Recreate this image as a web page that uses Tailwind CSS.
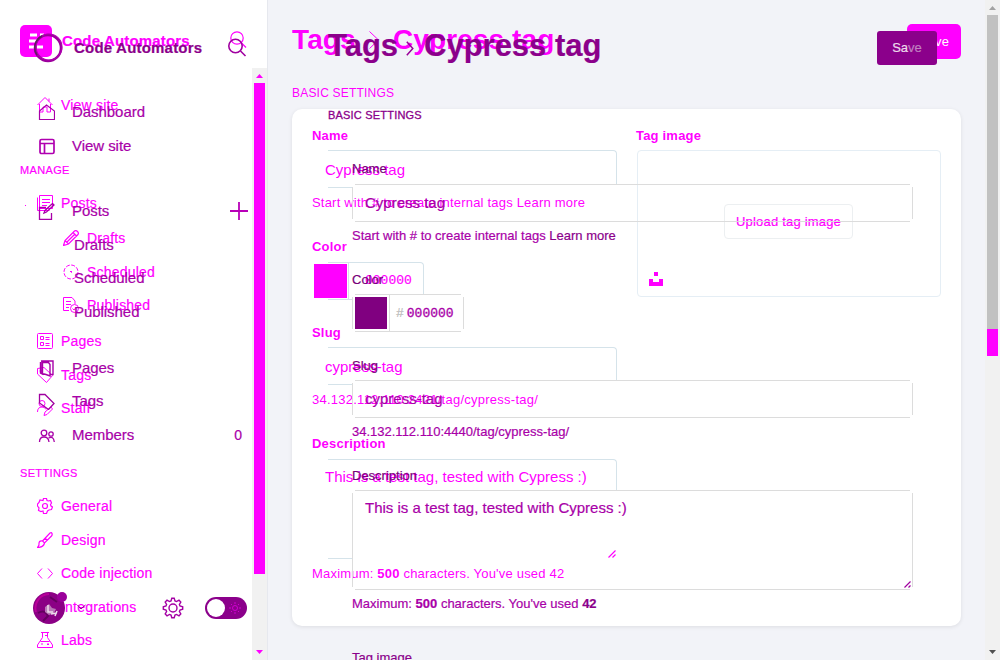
<!DOCTYPE html>
<html lang="en">
<head>
<meta charset="utf-8">
<title>Tags - Cypress tag</title>
<script src="https://cdn.jsdelivr.net/npm/@tailwindcss/browser@4"></script>
</head>
<body class="relative h-[660px] w-[1000px] overflow-hidden bg-[#f2f3f8] font-['Liberation_Sans',Arial,sans-serif] text-[#ff00ff]">

<!-- First layer -->
<div class="flex h-[660px] w-[1000px] overflow-hidden">
  <aside class="relative h-[660px] w-[268px] shrink-0 overflow-hidden border-r border-[#e6e8ee] bg-white text-[14px] leading-6 tracking-[0.2px] [-webkit-text-stroke:0.2px]">
    <div class="flex h-[57px] items-start pt-[25px] pl-5">
      <svg class="size-8" viewBox="0 0 32 32"><rect width="32" height="32" rx="5" fill="#f0f"/><path d="M10 10h7M20 10h4M9 16h8M9 22h5M17 22h6" stroke="#fff" stroke-width="3"/></svg>
      <span class="ml-[10px] h-8 w-[167px] text-[15px] font-bold leading-8 tracking-[0.17px]">Code Automators</span>
      <svg class="mt-[6px] size-[18px]" viewBox="0 0 18 18" fill="none" stroke="#f0f" stroke-width="1.200"><circle cx="8" cy="7" r="6.2"/><path d="m12.500 12 4.500 4.500"/></svg>
    </div>
    <nav class="flex flex-col pl-[37px] whitespace-nowrap">
      <a class="mt-[36px] flex h-6 items-center gap-2"><svg class="size-4" viewBox="0 0 16 16" fill="none" stroke="#f0f"><path d="M.5 8 8 .5 15.500 8M2.500 7v8h3.500v-5h4v5h3.500V7M12 1.500v3"/></svg>View site</a>
      <h2 class="-ml-[17px] mt-[41px] h-6 text-[11px] tracking-[0.35px]">MANAGE</h2>
      <a class="mt-[9px] flex h-6 items-center gap-2"><svg class="size-4" viewBox="0 0 16 16" fill="none" stroke="#f0f"><path d="M2.500.5h13v13h-13zM.5 2.500v13h12M5 4.500h8M5 7.500h8M5 10.500h5"/></svg>Posts</a>
      <a class="mt-[11px] ml-[26px] flex h-6 items-center gap-2"><svg class="size-4" viewBox="0 0 16 16" fill="none" stroke="#f0f" stroke-width="1.200"><path d="m.5 15.500 1.500-5L11.500 1q1.500-1 3 .5t.5 3L5.500 14zM2 10.500 5.500 14M10 2.500 13.500 6M4 12l8-8"/></svg>Drafts</a>
      <a class="mt-[10px] ml-[26px] flex h-6 items-center gap-2"><svg class="size-4" viewBox="0 0 16 16" fill="none" stroke="#f0f"><circle cx="8" cy="8" r="7" stroke-dasharray="4 1.500"/><path d="M7 7l1.500 1.500V7"/></svg>Scheduled</a>
      <a class="mt-[9px] ml-[26px] flex h-6 items-center gap-2"><svg class="size-4" viewBox="0 0 16 16" fill="none" stroke="#f0f"><path d="M6 13.500H.5V.5H9L12 4v3M3 4.500h5M3 7.500h5M3 10.500h3"/><circle cx="11.500" cy="11.500" r="4"/><path d="m9.500 11.500 1.500 1.500 2.500-3"/></svg>Published</a>
      <a class="mt-[12px] flex h-6 items-center gap-2"><svg class="size-4" viewBox="0 0 16 16" fill="none" stroke="#f0f"><rect x=".5" y=".5" width="15" height="15" rx="1"/><path d="M3.500 3.500h3v3h-3zM3.500 9.500h3v3h-3zM8.500 4.500h4M8.500 6.500h4M8.500 10.500h4M8.500 12.500h4"/></svg>Pages</a>
      <a class="mt-[10px] flex h-6 items-center gap-2"><svg class="size-4" viewBox="0 0 16 16" fill="none" stroke="#f0f"><path d="M.5 1.500 7 .5l8.500 8-6 7L.5 7z"/><circle cx="4" cy="4" r="1"/></svg>Tags</a>
      <a class="mt-[9px] flex h-6 items-center gap-2"><svg class="size-4" viewBox="0 0 16 16" fill="none" stroke="#f0f"><circle cx="5" cy="3.500" r="3"/><path d="M.5 12q0-5 4.500-5 3 0 4 2.500M7 15.500l1-3.500 6-5 1.500 2-5.500 5.500z"/></svg>Staff</a>
      <h2 class="-ml-[17px] mt-[41px] h-6 text-[11px] tracking-[0.35px]">SETTINGS</h2>
      <a class="mt-[9px] flex h-6 items-center gap-2"><svg class="size-4" viewBox="0 0 16 16" fill="none" stroke="#f0f" stroke-width="1.200"><path d="m6 2.500.5-2h3l.5 2 1.500.5 2-.5 1 2.500-1 1.500.5 1.500 1.500 1-1 2.500-2.500.5L10.500 13l-1 2.500h-3L6 13l-2 .5-2.500-1 .5-2.500L.5 8V6L2 4.500 3 2z"/><circle cx="8" cy="8" r="2.500"/></svg>General</a>
      <a class="mt-[10px] flex h-6 items-center gap-2"><svg class="size-4" viewBox="0 0 16 16" fill="none" stroke="#f0f" stroke-width="1.200"><path d="M5.500 9 13 1q1.500-1 2 .5t-.5 2.500L7.500 11zM8 6l2.500 2.500M5.500 9q-4-1-3.500 4l-1.500 2.500q6 0 7-4.500"/></svg>Design</a>
      <a class="mt-[9px] flex h-6 items-center gap-2"><svg class="size-4" viewBox="0 0 16 16" fill="none" stroke="#f0f"><path d="M5 3.500.5 8.500l4.500 5M11 3.500l4.500 5-4.500 5"/></svg>Code injection</a>
      <a class="mt-[10px] flex h-6 items-center gap-2"><svg class="size-4" viewBox="0 0 16 16" fill="none" stroke="#f0f"><circle cx="8" cy="8" r="6"/></svg>Integrations</a>
      <a class="mt-[9px] flex h-6 items-center gap-2"><svg class="size-4" viewBox="0 0 16 16" fill="none" stroke="#f0f"><path d="M4 .5h8M5.500.5v5L.5 13v2.500h15V13l-5-7.500v-5M3.500 9.500h9M8 3.500h2M5 13v-2M10 12.500h2M11 11v2"/></svg>Labs</a>
    </nav>
    <div class="absolute top-[68px] right-0 flex h-[592px] w-[15px] flex-col items-center bg-[#f1f1f1]">
      <svg class="h-[15px] w-[15px]" viewBox="0 0 15 15"><path d="M4 10h7L7.500 6z" fill="#f0f"/></svg>
      <div class="h-[491px] w-[11px] bg-[#ff00ff]"></div>
      <svg class="mt-auto h-[15px] w-[15px]" viewBox="0 0 15 15"><path d="M4 5h7L7.500 9z" fill="#f0f"/></svg>
    </div>
  </aside>

  <main class="w-[693px] shrink-0 pl-6 text-[13px] leading-6 tracking-[0.2px]">
    <div class="flex h-[59px] items-start pt-6">
      <h1 class="flex h-8 items-center text-[28px] font-bold leading-8 tracking-[0.1px] whitespace-nowrap"><span class="w-[77px]">Tags</span><svg class="mr-[14px] h-[18px] w-[10px]" viewBox="0 0 10 18" fill="none" stroke="#f0f"><path d="m.5.5 9 8.500-9 8.500"/></svg><span>Cypress tag</span></h1>
      <button class="ml-auto h-[35px] w-[54px] rounded-[5px] bg-[#ff00ff] text-white">Save</button>
    </div>
    <h2 class="mt-[22px] h-6 text-[12px]">BASIC SETTINGS</h2>
    <section class="mt-1 flex h-[517px] gap-5 rounded-[10px] bg-white px-5 pt-[15px] shadow-[0_1px_4px_rgba(0,0,0,0.09)]">
      <div class="w-[305px] shrink-0 whitespace-nowrap">
        <h3 class="h-6 font-bold">Name</h3>
        <div class="relative mt-[2px] h-[38px] pl-[13px] text-[15px] leading-10 tracking-normal">Cypress tag
          <i class="absolute top-0 right-0 h-[34px] w-[289px] rounded-tr-[4px] border-t border-r border-[#d5e3ea]"></i><i class="absolute bottom-0 left-4 h-px w-6 bg-[#d5e3ea]"></i>
        </div>
        <p class="mt-[3px] h-6">Start with # to create internal tags Learn more</p>
        <h3 class="mt-5 h-6 font-bold">Color</h3>
        <div class="relative mt-[3px] flex h-[38px] w-[112px] items-center font-['Liberation_Mono',monospace] tracking-normal">
          <i class="ml-[2px] h-[34px] w-[33px] bg-[#ff00ff]"></i><i class="ml-px h-[38px] w-px bg-[#d5e3ea]"></i><span class="ml-[16px] [-webkit-text-stroke:0.2px]">000000</span>
          <i class="absolute top-0 right-0 h-[32px] w-[96px] rounded-tr-[4px] border-t border-r border-[#d5e3ea]"></i><i class="absolute bottom-0 left-4 h-px w-6 bg-[#d5e3ea]"></i>
        </div>
        <h3 class="mt-[21px] h-6 font-bold">Slug</h3>
        <div class="relative mt-[2px] h-[38px] pl-[13px] text-[15px] leading-10 tracking-normal">cypress-tag
          <i class="absolute top-0 right-0 h-[33px] w-[289px] rounded-tr-[4px] border-t border-r border-[#d5e3ea]"></i><i class="absolute bottom-0 left-4 h-px w-6 bg-[#d5e3ea]"></i>
        </div>
        <p class="mt-[3px] h-6 tracking-[0.25px]">34.132.112.110:2421/tag/cypress-tag/</p>
        <h3 class="mt-5 h-6 font-bold">Description</h3>
        <div class="relative mt-[3px] h-[100px] pt-[5px] pl-[13px] text-[15px] leading-[26px] tracking-normal">This is a test tag, tested with Cypress :)
          <i class="absolute top-0 right-0 h-[31px] w-[289px] rounded-tr-[4px] border-t border-r border-[#d5e3ea]"></i><i class="absolute bottom-0 left-4 h-px w-6 bg-[#d5e3ea]"></i>
          <svg class="absolute right-[1px] bottom-[1px] size-2" viewBox="0 0 8 8" fill="none" stroke="#f0f" stroke-width="1.200"><path d="m.5 7.500 7-7M4.500 7.500l3-3"/></svg>
        </div>
        <p class="mt-[3px] h-6">Maximum: <b>500</b> characters. You've used 42</p>
      </div>
      <div class="w-[304px] shrink-0">
        <h3 class="-ml-px h-6 font-bold">Tag image</h3>
        <div class="mt-[2px] flex h-[147px] flex-col rounded-[4px] border border-[#e5eef5] pt-[53px]">
          <button class="ml-[86px] h-[35px] w-[129px] rounded-[4px] border border-[#eceff1] text-[13px] whitespace-nowrap [-webkit-text-stroke:0.2px]">Upload tag image</button>
          <svg class="mt-[33px] ml-[11px] size-[14px]" viewBox="0 0 14 14" fill="#f0f"><path d="M5 0h4v4H5zM0 7h4v3h6V7h4v7H0z"/></svg>
        </div>
      </div>
    </section>
  </main>

  <div class="ml-auto flex h-[660px] w-[15px] flex-col items-center bg-[#f1f1f1]">
    <svg class="h-[15px] w-[15px]" viewBox="0 0 15 15"><path d="M4 10h7L7.500 6z" fill="#a3a3a3"/></svg>
    <div class="h-[314px] w-[11px] bg-[#c1c1c1]"></div>
    <div class="h-[27px] w-[11px] bg-[#ff00ff]"></div>
    <svg class="mt-auto h-[15px] w-[15px]" viewBox="0 0 15 15"><path d="M4 5h7L7.500 9z" fill="#505050"/></svg>
  </div>
</div>

<!-- Second layer -->
<div class="absolute inset-0 flex overflow-hidden text-[#a800a8] [-webkit-text-stroke:0.2px]">
  <aside class="relative h-[660px] w-[268px] shrink-0 text-[15px] leading-6 tracking-[-0.05px]">
    <div class="flex h-[63px] items-end pl-[33px] text-[#8b008b]">
      <svg class="h-[30px] w-[30px]" viewBox="0 0 30 30" fill="none"><circle cx="15" cy="15" r="13" stroke="#9c009c" stroke-width="2.500"/><circle cx="16" cy="14" r="13" stroke="#b000b0" stroke-width="1.200"/><path d="M4 22A13 13 0 0 1 9 3" stroke="#602060" stroke-width="1.500"/></svg>
      <span class="ml-[11px] h-[30px] w-[153px] font-bold leading-[30px] tracking-[0.2px] whitespace-nowrap">Code Automators</span>
      <svg class="mb-[5px] size-5" viewBox="0 0 20 20" fill="none" stroke="#a000a0" stroke-width="1.600"><circle cx="8.500" cy="8" r="6.700"/><path d="m13.500 13 5 5"/></svg>
    </div>
    <nav class="flex flex-col pl-[38px] whitespace-nowrap">
      <a class="mt-[37px] flex h-6 items-center gap-[17px]"><svg class="size-[17px]" viewBox="0 0 17 17" fill="none" stroke="#a800a8" stroke-width="1.200"><path d="M1.500 15.500V7l7-6 8 6v8.500z"/></svg>Dashboard</a>
      <a class="mt-[10px] flex h-6 items-center gap-[17px]"><svg class="size-[17px]" viewBox="0 0 17 17" fill="none" stroke="#b000b0" stroke-width="1.700"><rect x="2" y="1.500" width="14" height="14" rx="1.500"/><path d="M2 5.500h14M6.500 5.500v10"/></svg>View site</a>
      <a class="mt-[41px] flex h-6 items-center gap-[17px]"><svg class="size-[17px]" viewBox="0 0 17 17" fill="none" stroke="#a800a8" stroke-width="1.300"><path d="M8 4.500H1.500v12h12V10M6 10l1-2.500 7.500-7L16 2 8.500 9z"/></svg>Posts<svg class="ml-[104px] size-[18px]" viewBox="0 0 18 18" stroke="#b800b8" stroke-width="1.800"><path d="M9 0v18M0 9h18"/></svg></a>
      <a class="mt-[10px] ml-9 h-6">Drafts</a>
      <a class="mt-[9px] ml-9 h-6">Scheduled</a>
      <a class="mt-[10px] ml-9 h-6">Published</a>
      <a class="mt-[32px] flex h-6 items-center gap-[17px]"><svg class="size-[17px]" viewBox="0 0 17 17" fill="none" stroke="#a800a8" stroke-width="1.400"><path d="M3 1h12v13.500h-3M4 2.500h6.500l1.500 2V16L8 14.500l-4-1zM2.500 2v11l2 1V3"/></svg>Pages</a>
      <a class="mt-[9px] flex h-6 items-center gap-[17px]"><svg class="size-[17px]" viewBox="0 0 17 17" fill="none" stroke="#a000a0" stroke-width="1.300"><path d="M1.500 10V1.500H7l9 9-5.500 6z"/></svg>Tags</a>
      <a class="mt-[10px] flex h-6 items-center gap-[17px]"><svg class="size-[17px]" viewBox="0 0 17 17" fill="none" stroke="#a800a8" stroke-width="1.300"><circle cx="6" cy="6" r="2.800"/><circle cx="13" cy="7" r="2.200"/><path d="M1.500 15q0-5 4.500-5t5 5M10.500 11q5-2.500 5.800 4"/></svg>Members<span class="ml-auto mr-[26px] text-[14px]">0</span></a>
    </nav>
    <div class="mt-[145px] flex h-8 items-center pl-[33px]">
      <svg class="-mt-1 h-9 w-[35px] shrink-0" viewBox="0 0 35 36"><circle cx="16" cy="20" r="16" fill="#8b0085"/><path d="M3 24A14 14 0 0 1 16 6" fill="none" stroke="#ba009a" stroke-width="2"/><path d="M5 25q7-4 10 3l-5 5M17 9l7 5" fill="none" stroke="#650060" stroke-width="2"/><path d="m12 19 4-3 3 4 4 1-2 4-5 2-4-3z" fill="#b978b7"/><path d="M15 17v7h5M18 26l6-1M24 23l-2 5" stroke="#eddcec" stroke-width="1.500" fill="none"/><circle cx="29" cy="9" r="5" fill="#9a009a"/></svg>
      <svg class="mb-[2px] ml-[9px] h-[6px] w-[9px]" viewBox="0 0 9 6" fill="none" stroke="#8b008b"><path d="m.5 1 3.500 4 4.500-4"/></svg>
      <svg class="ml-[76px] size-[22px]" viewBox="0 0 22 22" fill="none" stroke="#a400a4" stroke-width="1.400"><path d="m9 4 .8-2.700h2.400L13 4l1.500.6L17 3.200 18.800 5l-1.400 2.500L18 9l2.700.8v2.400L18 13l-.6 1.500 1.400 2.500-1.800 1.800-2.500-1.400L13 18l-.8 2.700H9.800L9 18l-1.500-.6L5 18.800 3.200 17l1.400-2.500L4 13l-2.700-.8V9.800L4 9l.6-1.500L3.200 5 5 3.200l2.500 1.400z"/><circle cx="11" cy="11" r="4"/></svg>
      <svg class="ml-[21px] h-[22px] w-[42px]" viewBox="0 0 42 22"><rect width="42" height="22" rx="11" fill="#8b008b"/><circle cx="11" cy="11" r="9" fill="#fff"/><g fill="none" stroke="#d000d0"><circle cx="30" cy="11" r="2.500"/><path d="M30 5v2M30 15v2M24 11h2M34 11h2M26 7l1 1M33 14l1 1M34 7l-1 1M27 14l-1 1"/></g></svg>
    </div>
    <i class="absolute top-[205px] left-[25px] size-px bg-[#ff00ff]"></i>
  </aside>

  <main class="relative w-[669px] pl-[60px] text-[13px] leading-6">
    <div class="flex h-[65px] items-end">
      <h1 class="flex h-8 items-center text-[31px] font-bold leading-8 text-[#8b008b] whitespace-nowrap mb-[3px]"><span class="w-[78px]">Tags</span><svg class="mt-[5px] mr-[10px] h-[15px] w-2" viewBox="0 0 8 15" fill="none" stroke="#9a009a" stroke-width="1.500"><path d="m.8.8 6 6.700-6 6.700"/></svg><span>Cypress tag</span></h1>
      <button class="ml-auto h-[34px] w-[60px] rounded-[3px] bg-[#8b008b] text-[#eddcec]">Sa<span class="text-[#c080c0]">ve</span></button>
    </div>
    <h2 class="mt-[38px] h-6 text-[11px] tracking-[0.2px] text-[#8b008b] [-webkit-text-stroke:0.3px]">BASIC SETTINGS</h2>
    <div class="w-[585px] pl-6 whitespace-nowrap">
      <h3 class="mt-[30px] h-6 text-[#780078]">Name</h3>
      <div class="relative mt-[3px] h-[38px] pl-[13px] text-[15px] leading-[38px]">Cypress tag
        <i class="absolute inset-x-[3px] inset-y-0 border-y border-[#dcdcdc]"></i><i class="absolute inset-x-0 inset-y-[3px] border-x border-[#dcdcdc]"></i>
      </div>
      <p class="mt-[2px] h-6">Start with # to create internal tags <span class="text-[#8b008b]">Learn more</span></p>
      <h3 class="mt-5 h-6 text-[#780078]">Color</h3>
      <div class="relative mt-[2px] flex h-[38px] w-[112px] items-center font-['Liberation_Mono',monospace]">
        <i class="ml-[3px] h-8 w-8 bg-[#800080]"></i><i class="ml-[2px] h-[38px] w-px bg-[#dcdcdc]"></i><span class="ml-[6px] mt-[2px] text-[#bbb]">#</span><span class="ml-[3px] mt-[2px] [-webkit-text-stroke:0.3px]">000000</span>
        <i class="absolute inset-x-[3px] inset-y-0 border-y border-[#dcdcdc]"></i><i class="absolute inset-x-0 inset-y-[3px] border-x border-[#dcdcdc]"></i>
      </div>
      <h3 class="mt-[22px] h-6 text-[#780078]">Slug</h3>
      <div class="relative mt-[2px] h-[38px] pl-[13px] text-[15px] leading-[38px]">cypress-tag
        <i class="absolute inset-x-[3px] inset-y-0 border-y border-[#dcdcdc]"></i><i class="absolute inset-x-0 inset-y-[3px] border-x border-[#dcdcdc]"></i>
      </div>
      <p class="mt-[2px] h-6">34.132.112.110:4440/tag/cypress-tag/</p>
      <h3 class="mt-5 h-6 text-[#780078]">Description</h3>
      <div class="relative mt-[2px] h-[100px] pt-[5px] pl-[13px] text-[15px] leading-[26px]">This is a test tag, tested with Cypress :)
        <i class="absolute inset-x-[3px] inset-y-0 border-y border-[#dcdcdc]"></i><i class="absolute inset-x-0 inset-y-[3px] border-x border-[#dcdcdc]"></i>
        <svg class="absolute right-[2px] bottom-[2px] size-[7px]" viewBox="0 0 7 7" fill="none" stroke="#a000a0" stroke-width="1.200"><path d="m.5 6.500 6-6M4.500 6.500l2-2"/></svg>
      </div>
      <p class="mt-[2px] h-6">Maximum: <b>500</b> characters. You've used <b class="text-[#8b008b]">42</b></p>
      <h3 class="mt-[30px] h-6 text-[#8b008b]">Tag image</h3>
    </div>
  </main>
</div>
</body>
</html>
